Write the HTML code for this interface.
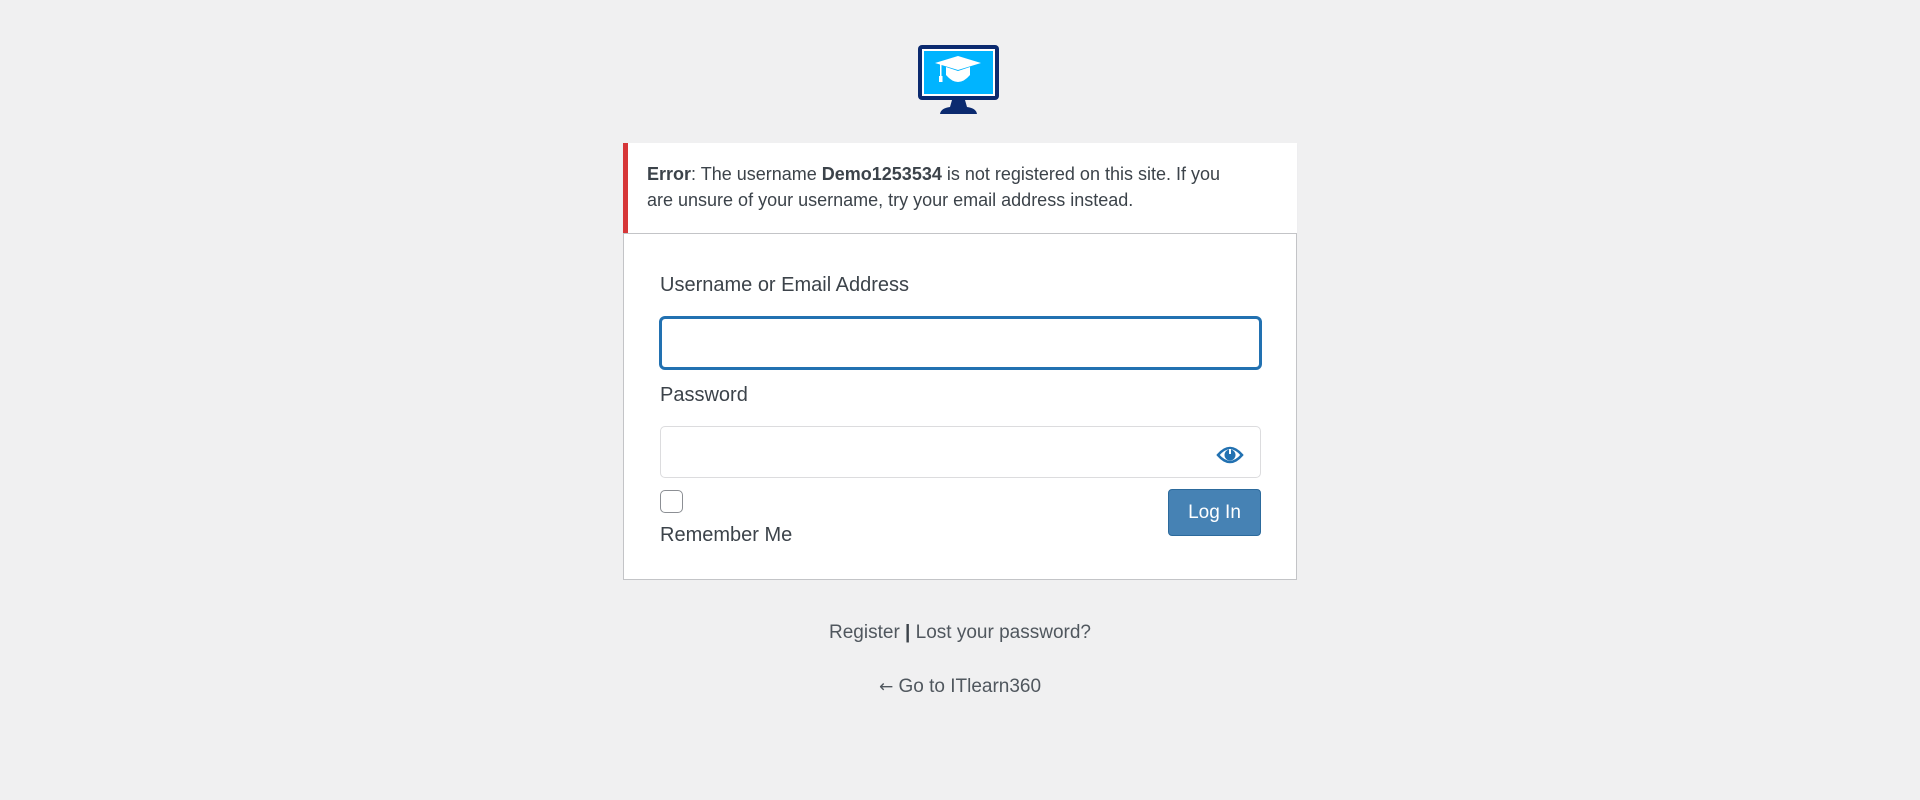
<!DOCTYPE html>
<html><head><meta charset="utf-8"><style>
html,body{margin:0;padding:0;background:#f0f0f1;width:1920px;height:800px;overflow:hidden;font-family:"Liberation Sans",sans-serif;color:#3c434a}
.abs{position:absolute}
</style></head><body>
<svg class="abs" style="left:918px;top:45px" width="81" height="69" viewBox="0 0 81 69">
<rect x="0" y="0" width="81" height="55" rx="4" fill="#0b2a6f"/>
<rect x="4" y="4" width="73" height="47" fill="#fff"/>
<rect x="6" y="6" width="69" height="43" fill="#00b4ff"/>
<path d="M34 55 L47 55 L49 62 Q58 63 59 69 L22 69 Q23 63 32 62 Z" fill="#0b2a6f"/>
<path d="M40 11 L63 18 L40 25 L17 18 Z" fill="#fff"/>
<path d="M28 22 L40 26 L52 22 L52 30 Q46 37 40 37 Q34 37 28 30 Z" fill="#fff"/>
<rect x="22" y="19" width="1.5" height="14" fill="#fff"/>
<rect x="21" y="31" width="3.5" height="6" fill="#fff"/>
</svg>
<div class="abs" style="left:623px;top:143px;width:674px;height:90px;background:#fff;box-shadow:0 1px 1px rgba(0,0,0,.04)">
<div class="abs" style="left:0;top:0;width:5px;height:90px;background:#d63638"></div>
<div class="abs" style="left:24px;top:18px;width:640px;font-size:18px;line-height:26px;color:#3c434a"><b>Error</b>: The username <b>Demo1253534</b> is not registered on this site. If you<br>are unsure of your username, try your email address instead.</div>
</div>
<div class="abs" style="left:623px;top:233px;width:672px;height:345px;background:#fff;border:1px solid #c3c4c7"></div>
<div class="abs" style="left:660px;top:274px;font-size:20px">Username or Email Address</div>
<div class="abs" style="left:660px;top:317px;width:597px;height:48px;border:2px solid #2271b1;border-radius:5px;background:#fff;box-shadow:0 0 0 1px #2271b1"></div>
<div class="abs" style="left:660px;top:384px;font-size:20px">Password</div>
<div class="abs" style="left:660px;top:426px;width:599px;height:50px;border:1px solid #dcdcde;border-radius:5px;background:#fff"></div>
<svg class="abs" style="left:1216px;top:445px" width="28" height="20" viewBox="0 0 28 20">
<path d="M2 10 Q14 -4 26 10 Q14 24 2 10 Z" fill="none" stroke="#2271b1" stroke-width="2.5"/>
<circle cx="14" cy="10" r="5.5" fill="#2271b1"/>
<rect x="13" y="4" width="2" height="5" fill="#fff"/>
</svg>
<div class="abs" style="left:660px;top:490px;width:21px;height:21px;border:1px solid #8c8f94;border-radius:5px;background:#fff"></div>
<div class="abs" style="left:660px;top:524px;font-size:20px">Remember Me</div>
<div class="abs" style="left:1168px;top:489px;width:91px;height:45px;background:#4682b4;border:1px solid #2c6a9c;border-radius:4px;color:#fff;font-size:19px;line-height:45px;text-align:center">Log In</div>
<div class="abs" style="left:0;top:622px;width:1920px;text-align:center;font-size:19px;color:#50575e">Register <b style="color:#3c434a">|</b> Lost your password?</div>
<div class="abs" style="left:0;top:676px;width:1920px;text-align:center;font-size:19px;color:#50575e"><span style="font-family:'DejaVu Sans',sans-serif;font-size:17px">←</span> Go to ITlearn360</div>
</body></html>
